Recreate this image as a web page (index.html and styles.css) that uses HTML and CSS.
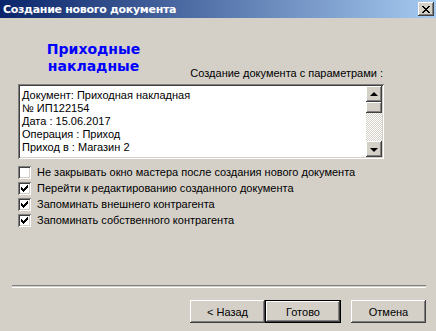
FILE: index.html
```html
<!DOCTYPE html>
<html>
  <head>
    <meta charset="utf-8" />
    <link rel="stylesheet" href="styles.css">
  </head>

  <body>
    <div class="window">
      <!-- заголовок окна -->
      <div class="titlebar">
        <span class="title">Создание нового документа</span>
        <span class="close-btn">
          <svg width="8" height="7" viewBox="0 0 8 7" shape-rendering="crispEdges">
            <path d="M0 0h2v1h1v1h2v-1h1v-1h2v1h-1v1h-1v1h-1v1h1v1h1v1h1v1h-2v-1h-1v-1h-2v1h-1v1h-2v-1h1v-1h1v-1h1v-1h-1v-1h-1v-1h-1z" fill="#000" />
          </svg>
        </span>
      </div>

      <div class="content">
        <div class="top-row">
          <h1 class="doc-kind">Приходные<br />накладные</h1>
          <div class="params-label">Создание документа с параметрами :</div>
        </div>

        <!-- параметры документа -->
        <div class="listbox">
          <div class="list-lines">
            <div>Документ: Приходная накладная</div>
            <div>№ ИП122154</div>
            <div>Дата : 15.06.2017</div>
            <div>Операция : Приход</div>
            <div>Приход в : Магазин 2</div>
          </div>
          <div class="scrollbar">
            <span class="scroll-btn"><span class="arrow-up"></span></span>
            <span class="scroll-thumb"></span>
            <span class="scroll-track"></span>
            <span class="scroll-btn"><span class="arrow-down"></span></span>
          </div>
        </div>

        <div class="options">
          <label class="option"><span class="checkbox"></span>Не закрывать окно мастера после создания нового документа</label>
          <label class="option"><span class="checkbox checked"></span>Перейти к редактированию созданного документа</label>
          <label class="option"><span class="checkbox checked"></span>Запоминать внешнего контрагента</label>
          <label class="option"><span class="checkbox checked"></span>Запоминать собственного контрагента</label>
        </div>

        <div class="separator"></div>

        <div class="buttons">
          <button class="btn">&lt; Назад</button>
          <button class="btn default">Готово</button>
          <button class="btn cancel">Отмена</button>
        </div>
      </div>
    </div>
  </body>
</html>
```

FILE: styles.css
```css
body {
  margin: 0;
  background: #d4d0c8;
  font-family: "Liberation Sans", Arial, sans-serif;
  font-size: 11px;
  color: #000;
}

.window {
  width: 436px;
  height: 331px;
  display: flex;
  flex-direction: column;
  overflow: hidden;
}

/* заголовок */
.titlebar {
  height: 18px;
  display: flex;
  align-items: center;
  justify-content: space-between;
  padding: 0 2px 0 3px;
  background: linear-gradient(90deg, #0a246a, #a6caf0);
}

.title {
  color: #fff;
  font-weight: bold;
  font-size: 11px;
  font-family: "DejaVu Sans", sans-serif;
  letter-spacing: -0.3px;
}

.close-btn {
  width: 16px;
  height: 14px;
  display: flex;
  align-items: center;
  justify-content: center;
  background: #d4d0c8;
  box-shadow: inset -1px -1px #404040, inset 1px 1px #fff,
    inset -2px -2px #808080, inset 2px 2px #d4d0c8;
}

.content {
  flex: 1;
  display: flex;
  flex-direction: column;
  padding: 23px 0 8px 18px;
}

.top-row {
  height: 39px;
  width: 366px;
  display: flex;
  justify-content: space-between;
}

.doc-kind {
  margin: 0;
  width: 151px;
  text-align: center;
  color: #0000ff;
  font-family: "DejaVu Sans", sans-serif;
  font-size: 14px;
  line-height: 17px;
  font-weight: bold;
  align-self: flex-start;
}

.params-label {
  align-self: flex-end;
  line-height: 13px;
  padding-right: 1px;
}

/* список параметров */
.listbox {
  margin-top: 4px;
  width: 366px;
  height: 75px;
  box-sizing: border-box;
  padding: 2px;
  background: #fff;
  display: flex;
  box-shadow: inset 1px 1px #808080, inset -1px -1px #fff,
    inset 2px 2px #404040, inset -2px -2px #d4d0c8;
}

.list-lines {
  flex: 1;
  padding: 3px 0 0 2px;
  line-height: 13px;
  overflow: hidden;
}

.scrollbar {
  width: 16px;
  display: flex;
  flex-direction: column;
}

.scroll-btn,
.scroll-thumb {
  height: 16px;
  flex: none;
  display: flex;
  align-items: center;
  justify-content: center;
  background: #d4d0c8;
  box-shadow: inset -1px -1px #404040, inset 1px 1px #fff,
    inset -2px -2px #808080, inset 2px 2px #d4d0c8;
}

.scroll-thumb {
  height: 11px;
}

.scroll-track {
  flex: 1;
  background: repeating-conic-gradient(#fff 0 25%, #d4d0c8 0 50%) 0 0 / 2px 2px;
}

.arrow-up,
.arrow-down {
  width: 0;
  height: 0;
  border-left: 4px solid transparent;
  border-right: 4px solid transparent;
}

.arrow-up {
  border-bottom: 4px solid #000;
  margin-top: -1px;
}

.arrow-down {
  border-top: 4px solid #000;
  margin-top: 1px;
}

/* флажки */
.options {
  margin-top: 5px;
  display: flex;
  flex-direction: column;
}

.option {
  height: 16px;
  display: flex;
  align-items: center;
  gap: 6px;
}

.checkbox {
  width: 13px;
  height: 13px;
  flex: none;
  box-sizing: border-box;
  background: #fff;
  box-shadow: inset 1px 1px #808080, inset -1px -1px #fff,
    inset 2px 2px #404040, inset -2px -2px #d4d0c8;
}

.checkbox.checked {
  background: #fff url("data:image/svg+xml,%3Csvg xmlns='http://www.w3.org/2000/svg' width='7' height='7' shape-rendering='crispEdges'%3E%3Cpath d='M6 0h1v3h-1v1h-1v1h-1v1h-1v1h-1v-1h-1v-1h-1v-3h1v1h1v1h1v-1h1v-1h1z' fill='%23000'/%3E%3C/svg%3E") no-repeat 3px 3px;
}

.separator {
  margin: auto 10px 0 -6px;
  height: 1px;
  border-top: 1px solid #808080;
  border-bottom: 1px solid #fff;
}

.buttons {
  margin-top: 12px;
  padding-right: 10px;
  display: flex;
  justify-content: flex-end;
}

.btn {
  width: 75px;
  height: 23px;
  padding: 0;
  border: none;
  background: #d4d0c8;
  font-family: "Liberation Sans", Arial, sans-serif;
  font-size: 11px;
  color: #000;
  box-shadow: inset -1px -1px #404040, inset 1px 1px #fff,
    inset -2px -2px #808080, inset 2px 2px #d4d0c8;
}

.btn.default {
  width: 76px;
  border: 1px solid #000;
}

.btn.cancel {
  margin-left: 10px;
}
```
